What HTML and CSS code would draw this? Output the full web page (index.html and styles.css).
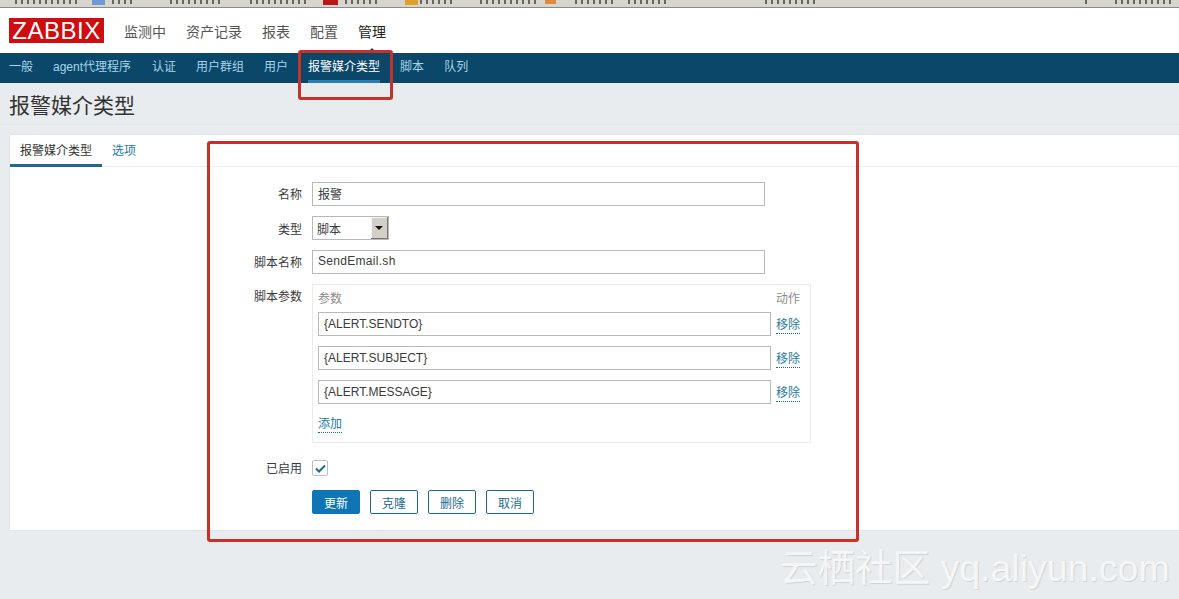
FILE: index.html
```html
<!DOCTYPE html>
<html lang="zh-CN">
<head>
    <meta charset="UTF-8">
    <title>报警媒介类型</title>
    <link rel="stylesheet" href="styles.css">
</head>
<body>

    <!-- Browser bookmarks strip, only the bottom edge is visible -->
    <div class="browser-strip"></div>

    <!-- Main menu -->
    <div class="top-menu">
        <div class="logo">ZABBIX</div>
        <a class="top-item">监测中</a>
        <a class="top-item">资产记录</a>
        <a class="top-item">报表</a>
        <a class="top-item">配置</a>
        <a class="top-item top-active">管理</a>
    </div>

    <div class="sub-menu">
        <a class="sub-item">一般</a>
        <a class="sub-item sub-agent">agent代理程序</a>
        <a class="sub-item">认证</a>
        <a class="sub-item">用户群组</a>
        <a class="sub-item">用户</a>
        <a class="sub-item sub-active">报警媒介类型</a>
        <a class="sub-item">脚本</a>
        <a class="sub-item">队列</a>
    </div>

    <!-- Page content -->
    <div class="content">
        <h1 class="page-title">报警媒介类型</h1>

        <div class="card">
            <div class="tabs">
                <a class="tab tab-active">报警媒介类型</a>
                <a class="tab">选项</a>
            </div>

            <div class="form">
                <div class="form-row">
                    <label class="form-label">名称</label>
                    <input class="text-input wide" type="text" value="报警">
                </div>
                <div class="form-row select-row">
                    <label class="form-label">类型</label>
                    <div class="select-box">
                        <span class="select-value">脚本</span>
                        <span class="select-button"><span class="select-arrow"></span></span>
                    </div>
                </div>
                <div class="form-row">
                    <label class="form-label">脚本名称</label>
                    <input class="text-input wide spaced" type="text" value="SendEmail.sh">
                </div>
                <div class="form-row params-row">
                    <label class="form-label">脚本参数</label>
                    <div class="params">
                        <div class="params-head">
                            <span>参数</span>
                            <span>动作</span>
                        </div>
                        <div class="param-row">
                            <input class="text-input param-input" type="text" value="{ALERT.SENDTO}">
                            <a class="link">移除</a>
                        </div>
                        <div class="param-row">
                            <input class="text-input param-input" type="text" value="{ALERT.SUBJECT}">
                            <a class="link">移除</a>
                        </div>
                        <div class="param-row">
                            <input class="text-input param-input" type="text" value="{ALERT.MESSAGE}">
                            <a class="link">移除</a>
                        </div>
                        <a class="link add-link">添加</a>
                    </div>
                </div>
                <div class="form-row enabled-row">
                    <label class="form-label">已启用</label>
                    <span class="checkbox">
                        <svg width="11" height="9" viewBox="0 0 11 9"><path d="M1 4.5 L4 7.5 L10 1.5" fill="none" stroke="#1f6a90" stroke-width="2"/></svg>
                    </span>
                </div>
                <div class="buttons">
                    <button class="btn btn-main">更新</button>
                    <button class="btn">克隆</button>
                    <button class="btn">删除</button>
                    <button class="btn">取消</button>
                </div>
            </div>
        </div>
    </div>

    <!-- Annotations drawn over the screenshot -->
    <div class="mark mark-nav"></div>
    <div class="mark mark-form"></div>
    <div class="watermark">云栖社区 yq.aliyun.com</div>

</body>
</html>
```

FILE: styles.css
```css
* {
    box-sizing: border-box;
}

body {
    font-family: "Liberation Sans", "Noto Sans CJK SC", Arial, sans-serif;
    font-size: 12px;
    background-color: #e9ecef;
    color: #3a3a3a;
    margin: 0;
    height: 599px;
    overflow: hidden;
    position: relative;
}

/* Browser strip: the cut off bookmark labels are only dark specks */
.browser-strip {
    --specks: repeating-linear-gradient(90deg, #666663 0 2px, transparent 2px 6px);
    height: 8px;
    background:
        var(--specks) 15px 0 / 65px 4px no-repeat,
        linear-gradient(#6f9ad6, #6f9ad6) 92px 0 / 13px 5px no-repeat,
        var(--specks) 112px 0 / 24px 4px no-repeat,
        var(--specks) 170px 0 / 50px 4px no-repeat,
        var(--specks) 250px 0 / 60px 4px no-repeat,
        linear-gradient(#b81818, #b81818) 323px 0 / 15px 5px no-repeat,
        var(--specks) 345px 0 / 35px 4px no-repeat,
        linear-gradient(#e0a030, #e0a030) 405px 0 / 13px 5px no-repeat,
        var(--specks) 420px 0 / 35px 4px no-repeat,
        var(--specks) 480px 0 / 60px 4px no-repeat,
        linear-gradient(#e08a40, #e08a40) 545px 0 / 11px 4px no-repeat,
        var(--specks) 575px 0 / 40px 4px no-repeat,
        var(--specks) 628px 0 / 42px 4px no-repeat,
        var(--specks) 765px 0 / 50px 4px no-repeat,
        var(--specks) 1085px 0 / 4px 4px no-repeat,
        var(--specks) 1115px 0 / 60px 4px no-repeat,
        #d8d5ce;
    border-bottom: 1px solid #8c8a85;
}

/* Main menu */
.top-menu {
    height: 45px;
    background-color: #ffffff;
    display: flex;
    align-items: center;
    padding-left: 9px;
}
.logo {
    width: 95px;
    height: 25px;
    margin-right: 10px;
    background-color: #d00c10;
    color: #ffffff;
    font-size: 24px;
    line-height: 25px;
    text-align: center;
    letter-spacing: 0.5px;
    overflow: hidden;
}
.top-item {
    font-size: 14px;
    color: #555;
    padding: 0 10px;
}
.top-active {
    color: #222;
    position: relative;
}
.top-active::after {
    content: "";
    position: absolute;
    left: 50%;
    bottom: -13px;
    margin-left: -6px;
    border: 6px solid transparent;
    border-top: 0;
    border-bottom-color: #0b4a6b;
}

.sub-menu {
    height: 30px;
    background-color: #0b4768;
    display: flex;
    padding-left: 9px;
    gap: 20px;
}
.sub-item {
    color: #a8d4ea;
    font-size: 12px;
    line-height: 29px;
    height: 30px;
}
.sub-agent {
    padding-right: 1px;
}
.sub-active {
    color: #ffffff;
    border-bottom: 3px solid #2b7fb0;
}

/* Page content */
.content {
    padding: 0 0 0 9px;
}
.page-title {
    font-size: 21px;
    font-weight: normal;
    line-height: 24px;
    height: 42px;
    margin: 0 0 0 -9px;
    padding: 11px 0 0 9px;
    color: #333;
    border-bottom: 1px solid #e2e5e8;
}
.card {
    height: 397px;
    margin-top: 9px;
    background-color: #ffffff;
    border: 1px solid #e2e5e8;
    border-right: 0;
}
.tabs {
    height: 32px;
    display: flex;
    border-bottom: 1px solid #ebeef0;
}
.tab {
    padding: 0 10px;
    height: 32px;
    line-height: 32px;
    color: #1f7a9c;
}
.tab-active {
    color: #333;
    border-bottom: 3px solid #1f6a90;
}

/* Form */
.form {
    padding-top: 15px;
}
.form-row {
    display: flex;
    align-items: center;
    margin-bottom: 10px;
}
.form-label {
    width: 302px;
    text-align: right;
    padding: 0 10px 2px 0;
    flex-shrink: 0;
    color: #3a3a3a;
}
.select-row .form-label {
    padding-bottom: 0;
}
.text-input {
    height: 24px;
    border: 1px solid #b8b8b8;
    background-color: #ffffff;
    font-family: inherit;
    font-size: 12px;
    color: #3a3a3a;
    padding: 0 5px;
    outline: none;
}
.wide {
    width: 453px;
    padding-bottom: 2px;
}
.spaced {
    letter-spacing: 0.3px;
}
.select-box {
    width: 77px;
    height: 24px;
    border: 1px solid #b8b8b8;
    display: flex;
    justify-content: space-between;
    align-items: center;
    padding-left: 4px;
}
.select-button {
    width: 17px;
    height: 22px;
    background-color: #d4d0c8;
    border-right: 1px solid #777;
    border-bottom: 1px solid #777;
    box-shadow: inset 1px 1px 0 #f4f4f4;
    display: flex;
    align-items: center;
    justify-content: center;
}
.select-arrow {
    border: 4px solid transparent;
    border-bottom: 0;
    border-top-color: #111;
}
.params-row {
    align-items: flex-start;
    margin-bottom: 0;
}
.params-row .form-label {
    padding-top: 3px;
}
.params {
    width: 499px;
    height: 159px;
    border: 1px solid #ebebeb;
    padding: 0 10px 0 5px;
}
.params-head {
    display: flex;
    justify-content: space-between;
    color: #8c8c8c;
    height: 27px;
    line-height: 29px;
}
.param-row {
    display: flex;
    justify-content: space-between;
    align-items: center;
    height: 24px;
    margin-bottom: 10px;
}
.param-input {
    width: 453px;
}
.link {
    color: #1f7a9c;
    border-bottom: 1px dotted #1f6a90;
    line-height: 15px;
    margin-top: 3px;
}
.add-link {
    display: inline-block;
    margin-top: 3px;
}
.enabled-row {
    margin-top: 17px;
    margin-bottom: 14px;
    height: 16px;
}
.checkbox {
    width: 16px;
    height: 16px;
    border: 1px solid #b8c4cc;
    border-radius: 2px;
    display: flex;
    align-items: center;
    justify-content: center;
}
.buttons {
    display: flex;
    gap: 10px;
    padding-left: 302px;
}
.btn {
    width: 48px;
    height: 24px;
    border: 1px solid #1f6a90;
    border-radius: 2px;
    background-color: #ffffff;
    color: #1f6a90;
    font-family: inherit;
    font-size: 12px;
    padding: 0;
}
.btn-main {
    background-color: #0f75b5;
    border-color: #0f75b5;
    color: #ffffff;
}

/* Annotations */
.mark {
    position: absolute;
    border: 3px solid #c8302a;
    border-radius: 3px;
    pointer-events: none;
}
.mark-nav {
    left: 298px;
    top: 50px;
    width: 95px;
    height: 50px;
}
.mark-form {
    left: 207px;
    top: 141px;
    width: 652px;
    height: 401px;
}
.watermark {
    position: absolute;
    left: 780px;
    top: 546px;
    font-size: 37.5px;
    line-height: 44px;
    color: #f4f6f7;
    text-shadow: 1px 1px 1px #cfd3d7;
    white-space: nowrap;
}
```
